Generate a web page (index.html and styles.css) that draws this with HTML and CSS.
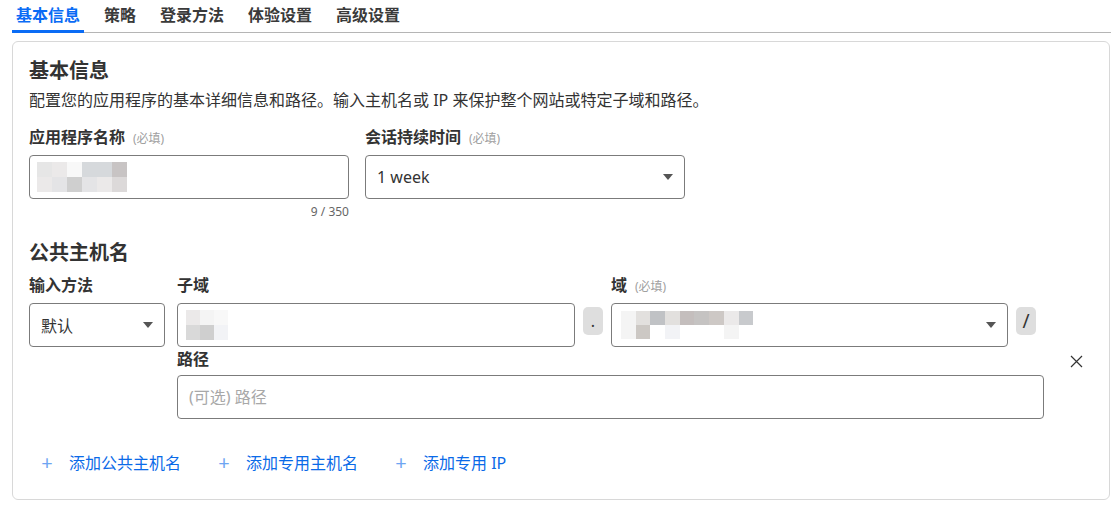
FILE: index.html
```html
<!DOCTYPE html>
<html>
<head>
    <meta charset='utf-8'>
    <title>基本信息</title>
    <meta name='viewport' content='width=device-width, initial-scale=1'>
    <link rel="stylesheet" href="styles.css">
</head>
<body>
    <nav class="tabs">
        <a class="tab active">基本信息</a>
        <a class="tab">策略</a>
        <a class="tab">登录方法</a>
        <a class="tab">体验设置</a>
        <a class="tab">高级设置</a>
    </nav>

    <section class="card">
        <h2 class="title">基本信息</h2>
        <p class="desc">配置您的应用程序的基本详细信息和路径。输入主机名或 IP 来保护整个网站或特定子域和路径。</p>

        <div class="row">
            <div class="field">
                <div class="lbl">应用程序名称<span class="req">(必填)</span></div>
                <div class="input">
                    <div class="mosaic cols-6">
                        <i class="c1"></i><i class="c2"></i><i class="c0"></i><i class="c4"></i><i class="c4"></i><i class="c6"></i>
                        <i class="c2"></i><i class="c3"></i><i class="c5"></i><i class="c3"></i><i class="c2"></i><i class="c7"></i>
                    </div>
                </div>
                <div class="count">9 / 350</div>
            </div>
            <div class="field">
                <div class="lbl">会话持续时间<span class="req">(必填)</span></div>
                <div class="input select">1 week<span class="caret"></span></div>
            </div>
        </div>

        <h2 class="title sub">公共主机名</h2>

        <div class="host">
            <div class="lbl col-method">输入方法</div>
            <div class="lbl col-sub">子域</div>
            <div class="lbl col-domain">域<span class="req">(必填)</span></div>

            <div class="input select method">默认<span class="caret"></span></div>
            <div class="input col-sub">
                <div class="mosaic cols-3 small">
                    <i class="c2"></i><i class="c9"></i><i class="c0"></i>
                    <i class="c8"></i><i class="c5"></i><i class="c10"></i>
                </div>
            </div>
            <div class="sep col-dot">.</div>
            <div class="input select col-domain">
                <div class="mosaic cols-9">
                    <i class="c9"></i><i class="c11"></i><i class="c12"></i><i class="c11"></i><i class="c13"></i><i class="c14"></i><i class="c15"></i><i class="c2"></i><i class="c16"></i>
                    <i class="c9"></i><i class="c17"></i><i class="cw"></i><i class="c10"></i><i class="cw"></i><i class="cw"></i><i class="cw"></i><i class="c9"></i><i class="cw"></i>
                </div>
                <span class="caret"></span>
            </div>
            <div class="sep col-slash">/</div>

            <div class="lbl col-path path-lbl">路径</div>
            <button class="close" aria-label="删除">
                <svg width="13" height="13" viewBox="0 0 13 13"><path d="M1 1L12 12M12 1L1 12" stroke="#333" stroke-width="1.2" fill="none"/></svg>
            </button>
            <input class="input col-path" type="text" placeholder="(可选) 路径">
        </div>

        <div class="adds">
            <a class="add"><span class="plus">+</span>添加公共主机名</a>
            <a class="add"><span class="plus">+</span>添加专用主机名</a>
            <a class="add"><span class="plus">+</span>添加专用 IP</a>
        </div>
    </section>
</body>
</html>
```

FILE: styles.css
```css
* {
    box-sizing: border-box;
    font-family: "Noto Sans", "Noto Sans CJK SC", sans-serif;
}
body {
    margin: 0;
    background: #fff;
    color: #333;
}

.tabs {
    display: flex;
    gap: 16px;
    margin-left: 12px;
    padding-top: 4px;
    border-bottom: 1px solid #b5b5b5;
}
.tab {
    padding: 0 4px 4px;
    margin-bottom: -1px;
    border-bottom: 3px solid transparent;
    font-size: 16px;
    line-height: 22px;
    font-weight: 700;
    color: #3a3a3a;
    cursor: pointer;
}
.tab.active {
    color: #0a6cf5;
    border-bottom-color: #0a6cf5;
}

.card {
    margin: 8px 1px 0 12px;
    padding: 15px 16px 25px;
    border: 1px solid #d8d8d8;
    border-radius: 6px;
}
.title {
    margin: 0;
    font-size: 20px;
    line-height: 28px;
    font-weight: 700;
    color: #333;
}
.title.sub {
    margin-top: 19px;
}
.desc {
    margin: 4px 0 0;
    font-size: 16px;
    line-height: 22px;
}

.row {
    display: flex;
    gap: 16px;
    margin-top: 15px;
}
.field {
    width: 320px;
    display: flex;
    flex-direction: column;
}
.lbl {
    font-size: 16px;
    line-height: 22px;
    font-weight: 700;
    margin-bottom: 5px;
    white-space: nowrap;
}
.req {
    margin-left: 8px;
    font-size: 12px;
    font-weight: 400;
    color: #a0a0a0;
}
.input {
    height: 44px;
    width: 100%;
    padding: 0 11px;
    display: flex;
    align-items: center;
    border: 1px solid #7b7b7b;
    border-radius: 4px;
    background: #fff;
    font-size: 16px;
    color: #333;
}
input.input {
    outline: none;
}
input.input::placeholder {
    color: #a8a8a8;
}
.select {
    justify-content: space-between;
}
.caret {
    width: 0;
    height: 0;
    border-left: 5px solid transparent;
    border-right: 5px solid transparent;
    border-top: 6px solid #555;
    margin-left: auto;
}
.count {
    margin-top: 5px;
    align-self: flex-end;
    font-size: 12px;
    line-height: 16px;
    color: #666;
}

.mosaic {
    display: grid;
    grid-auto-rows: 15px;
    margin-left: -4px;
}
.mosaic.cols-6 { grid-template-columns: repeat(6, 15px); }
.mosaic.cols-3 { grid-template-columns: repeat(3, 14px); margin-left: -3px; }
.mosaic.cols-9 { grid-template-columns: repeat(9, 14.7px); grid-auto-rows: 14px; margin-left: -2px; }
.mosaic.small { grid-auto-rows: 15px; }
.mosaic i { display: block; }
.c0 { background: #f8f8f8; }
.c1 { background: #e6e6e6; }
.c2 { background: #ebe9e9; }
.c3 { background: #e4e4e6; }
.c4 { background: #d6d9dc; }
.c5 { background: #cfcfcf; }
.c6 { background: #c8c4c4; }
.c7 { background: #dcd9d9; }
.c8 { background: #d9d9d9; }
.c9 { background: #f4f4f4; }
.c10 { background: #f2f3f6; }
.c11 { background: #e2e0de; }
.c12 { background: #c0c2c5; }
.c13 { background: #c4bebd; }
.c14 { background: #c5c3c2; }
.c15 { background: #cdc8c5; }
.c16 { background: #c8cacd; }
.c17 { background: #ccc8c4; }
.cw { background: #fff; }

.host {
    display: grid;
    grid-template-columns: 140px 398px 20px 397px 20px 0 1fr;
    column-gap: 8px;
    margin-top: 7px;
}
.col-method { grid-column: 1; grid-row: 1; }
.col-sub { grid-column: 2; }
.col-dot { grid-column: 3; }
.col-domain { grid-column: 4; }
.col-slash { grid-column: 5; }
.col-path { grid-column: 2 / 7; }
.lbl.col-sub, .lbl.col-domain { grid-row: 1; }
.method {
    grid-column: 1;
    grid-row: 2;
    width: 136px;
}
.input.col-sub, .input.col-domain, .sep { grid-row: 2; }
.sep {
    align-self: start;
    margin-top: 4px;
    height: 28px;
    border-radius: 5px;
    background: #dedede;
    display: flex;
    align-items: center;
    justify-content: center;
    font-size: 16px;
    color: #333;
}
.col-slash {
    font-size: 19px;
}
.path-lbl {
    grid-row: 3;
    margin-top: 1px;
}
.close {
    grid-column: 7;
    grid-row: 3;
    align-self: center;
    justify-self: start;
    margin-left: 18px;
    padding: 0;
    border: none;
    background: none;
    display: flex;
    cursor: pointer;
}
input.col-path { grid-row: 4; }

.adds {
    display: flex;
    gap: 13px;
    margin-top: 33px;
}
.add {
    display: flex;
    align-items: center;
    padding: 0 12px;
    font-size: 16px;
    line-height: 22px;
    color: #0a6ae8;
    cursor: pointer;
}
.plus {
    width: 12px;
    margin-right: 16px;
    font-size: 20px;
    line-height: 22px;
    text-align: center;
    color: #6ea5f2;
}
```
